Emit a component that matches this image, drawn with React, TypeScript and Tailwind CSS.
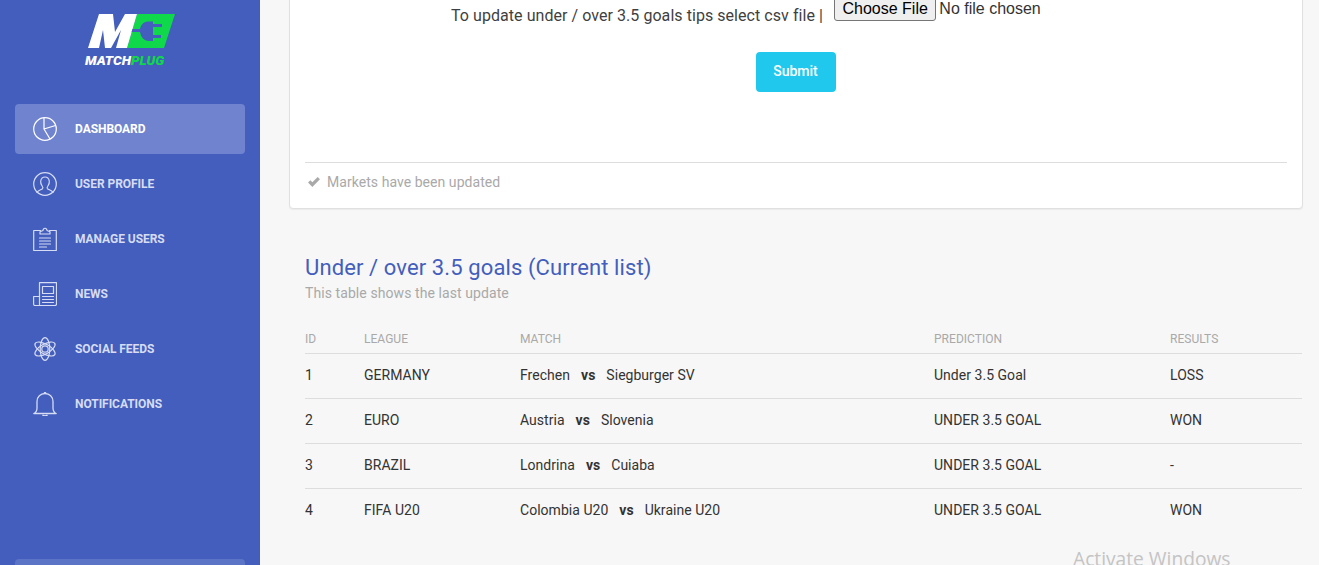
import React from "react";

const stroke = { fill: "none", stroke: "currentColor", strokeWidth: 1.2, strokeLinecap: "round", strokeLinejoin: "round" } as const;

const Pie = () => (
  <svg viewBox="0 0 24 24" className="h-[24px] w-[24px]" {...stroke}>
    <circle cx="12" cy="12" r="11.300" />
    <path d="M11 .8V12l6 10M11 12l11.500-3.500" />
  </svg>
);
const User = () => (
  <svg viewBox="0 0 24 24" className="h-[24px] w-[24px]" {...stroke}>
    <circle cx="12" cy="12" r="11.300" />
    <path d="M4 20.500c.8-2.300 4.200-2.700 5.500-3.800.8-.8.400-1.700-.4-2.700-1.100-1.400-1.600-2.900-1.400-4.700.3-2.600 2.100-4.300 4.300-4.300s4 1.700 4.300 4.300c.2 1.800-.3 3.300-1.400 4.700-.8 1-1.200 1.900-.4 2.700 1.300 1.100 4.700 1.500 5.500 3.800" />
  </svg>
);
const Clip = () => (
  <svg viewBox="0 0 24 24" className="h-[24px] w-[24px]" {...stroke}>
    <path d="M7.500 3.500H.7v20h22.600v-20h-6.800" />
    <path d="M7 7V4.700l3-1.200c.3-3 3.700-3 4 0l3 1.200V7z" />
    <path d="M6.500 11h11M6.500 14h11M6.500 17h11M6.500 20h7" />
  </svg>
);
const News = () => (
  <svg viewBox="0 0 24 24" className="h-[24px] w-[24px]" {...stroke}>
    <path d="M6.500 22.500V.7h17v21.300c0 1-.6 1.500-1.500 1.500H2c-.9 0-1.400-.6-1.400-1.500V14.500h5.900" />
    <path d="M9.500 4.500h11v7h-11zM9.500 14.500h11M9.500 17.500h11M9.500 20.500h11" />
  </svg>
);
const Atom = () => (
  <svg viewBox="0 0 24 24" className="h-[24px] w-[24px]" {...stroke}>
    <ellipse cx="12" cy="12" rx="4.800" ry="11.300" />
    <ellipse cx="12" cy="12" rx="4.800" ry="11.300" transform="rotate(60 12 12)" />
    <ellipse cx="12" cy="12" rx="4.800" ry="11.300" transform="rotate(120 12 12)" />
    <circle cx="12" cy="12" r="3.200" />
  </svg>
);
const Bell = () => (
  <svg viewBox="0 0 24 24" className="h-[24px] w-[24px]" {...stroke}>
    <path d="M.8 21.500c2-.8 3.200-2.500 3.200-5.500V9.500C4 5 7.500 1.500 12 1.500s8 3.500 8 8V16c0 3 1.200 4.700 3.200 5.500z" strokeWidth="1.300" />
    <path d="M10 23.300c.8 1 3.200 1 4 0" strokeWidth="1.500" />
    <path d="M11.500 .8h1" strokeWidth="1.500" />
  </svg>
);

const nav = [
  { label: "DASHBOARD", Icon: Pie, active: true },
  { label: "USER PROFILE", Icon: User },
  { label: "MANAGE USERS", Icon: Clip },
  { label: "NEWS", Icon: News },
  { label: "SOCIAL FEEDS", Icon: Atom },
  { label: "NOTIFICATIONS", Icon: Bell },
];

const rows = [
  ["1", "GERMANY", "Frechen", "Siegburger SV", "Under 3.5 Goal", "LOSS"],
  ["2", "EURO", "Austria", "Slovenia", "UNDER 3.5 GOAL", "WON"],
  ["3", "BRAZIL", "Londrina", "Cuiaba", "UNDER 3.5 GOAL", "-"],
  ["4", "FIFA U20", "Colombia U20", "Ukraine U20", "UNDER 3.5 GOAL", "WON"],
];

export default function App() {
  return (
    <div className="relative flex h-[565px] w-[1319px] overflow-hidden bg-[#f7f7f7] font-['Roboto',sans-serif] text-[#333333]">
      <aside className="flex h-[565px] w-[260px] shrink-0 flex-col overflow-hidden bg-[#435ebc] px-[15px]">
        <div className="flex h-[104px] shrink-0 flex-col items-start pl-[70px] pt-[14px]">
          <svg viewBox="0 0 90 34" className="h-[34px] w-[90px]">
            <path d="M52 0 H90 L79 34 H42 Z" fill="#10d84b" />
            <path d="M3 34 L14 0 H28 L30 18 L40 0 H52 L42 34 H31 L36 16 L26 34 H20 L18 16 L14 34 Z" fill="#ffffff" />
            <path d="M47.500 15 H55 C56 10 59 7.500 64 7.500 H68 V10 H77 V13 H68 V21 H76 V24 H68 V27 H64 C59 27 56 23.500 55 18 H46.500 Z" fill="#435ebc" />
          </svg>
          <div className="mt-[6px] text-[13.600px] leading-[12px] font-black italic">
            <span className="text-white">MATCH</span>
            <span className="text-[#10d84b]">PLUG</span>
          </div>
        </div>
        <nav className="flex flex-col gap-[5px]">
          {nav.map(({ label, Icon, active }) => (
            <div
              key={label}
              className={`flex h-[50px] items-center rounded-[4px] pl-[18px] ${active ? "bg-[#7083cf] text-white" : "text-[#d6dcf3]"}`}
            >
              <Icon />
              <span className="ml-[18px] text-[12px] font-bold tracking-[-0.05px]">{label}</span>
            </div>
          ))}
        </nav>
        <div className="mt-[130px] h-[50px] shrink-0 rounded-[4px] bg-[#5c74c6]" />
      </aside>

      <main className="min-w-0 flex-1 pl-[29px] pr-[16px]">
        <section className="-mt-[20px] h-[229px] rounded-[4px] border border-[#e0e0e0] bg-white px-[15px] shadow-[0_1px_1px_rgba(0,0,0,0.05)]">
          <div className="flex h-[28px] items-start pl-[146px] pt-[19px]">
            <span className="mt-[5px] text-[16px] leading-[22px] tracking-[0.055px] text-[#3f3f3f]">To update under / over 3.5 goals tips select csv file |</span>
            <input
              type="file"
              className="ml-[11px] -mt-[3px] w-[240px] font-['Liberation_Sans',sans-serif] text-[16px] leading-[20px] text-[#333333] file:mr-[3px] file:rounded-[3px] file:border file:border-[#767676] file:bg-[#efefef] file:px-[7.5px] file:py-[1px] file:text-black"
            />
          </div>
          <div className="mt-[43px] flex justify-center pr-[1px]">
            <button className="h-[40px] w-[80px] rounded-[4px] bg-[#1fc8ec] pb-[2px] text-[14px] font-medium text-white">Submit</button>
          </div>
          <div className="mt-[70px] flex h-[39px] items-center gap-[6px] border-t border-[#dddddd] pl-[2px] text-[14px] tracking-[0.05px] text-[#a9a9a9]">
            <svg viewBox="0 0 14 12" className="h-[11px] w-[14px]" fill="#a9a9a9">
              <path d="M0.500 6 L3 3.500 L5.200 5.700 L11 0 L13.500 2.500 L5.200 11 Z" />
            </svg>
            <span>Markets have been updated</span>
          </div>
        </section>

        <div className="mr-[1px] pl-[16px]">
          <h2 className="mt-[46px] text-[22px] leading-[26px] tracking-[0.11px] text-[#435ebc]">Under / over 3.5 goals (Current list)</h2>
          <p className="mt-[2px] text-[14px] leading-[20px] tracking-[0.08px] text-[#a9a9a9]">This table shows the last update</p>

          <table className="mt-[20px] w-full table-fixed border-collapse text-[14px] tracking-[0.03px]">
            <colgroup>
              <col className="w-[59px]" />
              <col className="w-[156px]" />
              <col className="w-[414px]" />
              <col className="w-[236px]" />
              <col />
            </colgroup>
            <thead>
              <tr className="h-[30px] border-b border-[#dddddd] text-left text-[12px] text-[#a9a9a9]">
                <th className="pt-[3px] font-normal">ID</th>
                <th className="pt-[3px] font-normal">LEAGUE</th>
                <th className="pt-[3px] font-normal">MATCH</th>
                <th className="pt-[3px] font-normal">PREDICTION</th>
                <th className="pt-[3px] font-normal">RESULTS</th>
              </tr>
            </thead>
            <tbody>
              {rows.map(([id, league, a, b, pred, res]) => (
                <tr key={id} className="h-[45px] border-b border-[#dddddd] last:border-b-0">
                  <td>{id}</td>
                  <td>{league}</td>
                  <td>
                    {a}
                    <b className="mx-[11px] font-bold">vs</b>
                    {b}
                  </td>
                  <td>{pred}</td>
                  <td>{res}</td>
                </tr>
              ))}
            </tbody>
          </table>
        </div>
      </main>

      <div className="absolute left-[1073px] top-[545px] font-['Open_Sans',sans-serif] text-[19.200px] leading-[27px] text-[#c4c4c4]">Activate Windows</div>
    </div>
  );
}
